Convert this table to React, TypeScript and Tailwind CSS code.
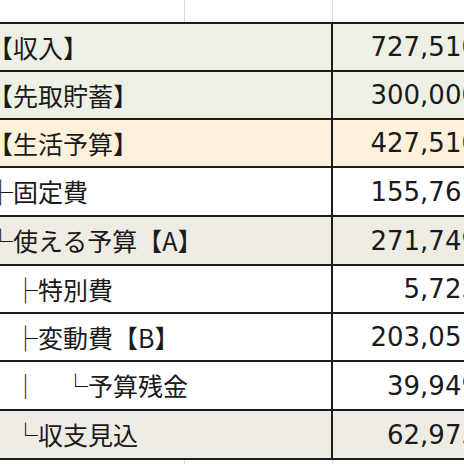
const rows = [
  { label: "【収入】", value: "727,510", bg: "bg-[#edf0e4]", h: "h-[48px]" },
  { label: "【先取貯蓄】", value: "300,000", bg: "bg-[#edf0e4]", h: "h-[48px]" },
  { label: "【生活予算】", value: "427,510", bg: "bg-[#fdf1dc]", h: "h-[48px]" },
  { label: "├固定費", value: "155,761", bg: "bg-white", h: "h-[49px]" },
  { label: "└使える予算【A】", value: "271,749", bg: "bg-[#eeece3]", h: "h-[49px]" },
  { label: "　├特別費", value: "5,723", bg: "bg-white", h: "h-[48px]" },
  { label: "　├変動費【B】", value: "203,051", bg: "bg-white", h: "h-[48px]" },
  { label: "　│　└予算残金", value: "39,949", bg: "bg-white", h: "h-[49px]" },
  { label: "　└収支見込", value: "62,975", bg: "bg-[#eeece3]", h: "h-[49px]" },
];

function GridStrip({ h }: { h: string }) {
  return (
    <div className={`flex ${h}`}>
      <div className="w-[185px] border-r border-[#dadada]" />
      <div className="w-[148px] border-r border-[#dadada]" />
      <div className="flex-1" />
    </div>
  );
}

export default function App() {
  return (
    <div className="w-[464px] h-[464px] overflow-hidden bg-white">
      <div className="w-[490px]">
        <GridStrip h="h-[22px]" />
        <div className="border-t-2 border-[#1c1c1c]">
          {rows.map((r) => (
            <div
              key={r.label}
              className={`flex ${r.h} ${r.bg} border-b-2 border-[#1c1c1c]`}
            >
              <div className="w-[333px] border-r-2 border-[#1c1c1c] flex items-center overflow-hidden">
                <span
                  className="-ml-[12px] whitespace-pre text-[25px] leading-none text-[#1a1a1a]"
                  style={{ fontFamily: '"Noto Sans CJK JP", sans-serif' }}
                >
                  {r.label}
                </span>
              </div>
              <div className="flex-1 flex items-center justify-end pr-[12px]">
                <span
                  className="text-[26px] leading-none text-[#1a1a1a]"
                  style={{ fontFamily: '"DejaVu Sans", sans-serif' }}
                >
                  {r.value}
                </span>
              </div>
            </div>
          ))}
        </div>
        <GridStrip h="h-[10px]" />
      </div>
    </div>
  );
}
